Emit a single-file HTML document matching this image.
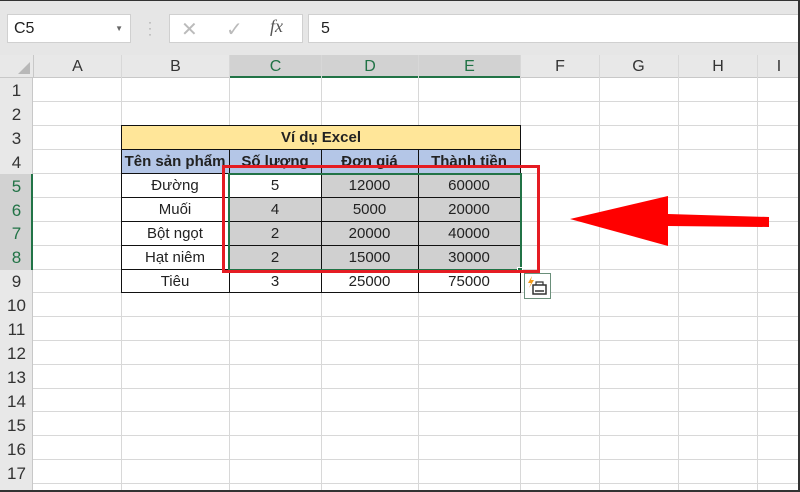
<!DOCTYPE html><html><head><meta charset="utf-8"><style>
*{margin:0;padding:0;box-sizing:border-box}
html,body{width:800px;height:492px;overflow:hidden}
body{background:#fff;position:relative;font-family:"Liberation Sans",sans-serif;font-size:15px;color:#222}
#w{position:absolute;left:0;top:0;width:800px;height:492px;overflow:hidden}
.a{position:absolute}
.vl{position:absolute;width:1px;background:#d8d8d8;top:55px;height:437px}
.hl{position:absolute;height:1px;background:#d8d8d8;left:0;width:800px}
.rh{position:absolute;left:0;width:33px;background:#e8e8e8;text-align:center;font-size:16px;color:#333;border-right:1px solid #c8c8c8}
.ch{position:absolute;top:55px;height:23px;text-align:center;line-height:23px;font-size:16px;color:#333}
.c{position:absolute;text-align:center;line-height:23px;height:24px}
.b{font-weight:bold}
</style></head><body><div id="w">
<div class="a" style="left:0;top:0;width:800px;height:55px;background:#e6e6e6;border-top:1px solid #333"></div>
<div class="a" style="left:7px;top:14px;width:124px;height:29px;background:#fff;border:1px solid #d0d0d0;font-size:16px;line-height:27px;padding-left:6px">C5<span style="position:absolute;right:7px;top:0;font-size:8px;color:#666">▼</span></div>
<div class="a" style="left:148px;top:19px;color:#999;font-size:12px;line-height:6px">·<br>·<br>·</div>
<div class="a" style="left:169px;top:14px;width:134px;height:29px;background:#fff;border:1px solid #d0d0d0"></div>
<div class="a" style="left:181px;top:17px;color:#bbb;font-size:20px">✕</div>
<div class="a" style="left:226px;top:17px;color:#bbb;font-size:20px">✓</div>
<div class="a" style="left:270px;top:16px;color:#555;font-size:18px;font-style:italic;font-family:'Liberation Serif',serif">fx</div>
<div class="a" style="left:308px;top:14px;width:492px;height:29px;background:#fff;border:1px solid #d0d0d0;line-height:27px;padding-left:12px;font-size:16px">5</div>
<div class="a" style="left:0;top:55px;width:800px;height:23px;background:#e8e8e8;border-bottom:1px solid #c8c8c8"></div>
<div class="a" style="left:229px;top:55px;width:291px;height:23px;background:#d2d2d2;border-bottom:2px solid #217346"></div>
<div class="a" style="left:18px;top:62px;width:0;height:0;border-left:12px solid transparent;border-bottom:12px solid #b8b8b8"></div>
<div class="ch" style="left:33px;width:89px">A</div>
<div class="ch" style="left:122px;width:107px">B</div>
<div class="ch" style="left:229px;width:93px;color:#217346">C</div>
<div class="ch" style="left:322px;width:96px;color:#217346">D</div>
<div class="ch" style="left:418px;width:103px;color:#217346">E</div>
<div class="ch" style="left:521px;width:78px">F</div>
<div class="ch" style="left:599px;width:79px">G</div>
<div class="ch" style="left:678px;width:80px">H</div>
<div class="ch" style="left:758px;width:42px">I</div>
<div class="a" style="left:33px;top:55px;width:1px;height:23px;background:#c8c8c8"></div>
<div class="vl" style="left:121px"></div><div class="vl" style="left:229px"></div><div class="vl" style="left:321px"></div><div class="vl" style="left:418px"></div><div class="vl" style="left:520px"></div><div class="vl" style="left:599px"></div><div class="vl" style="left:678px"></div><div class="vl" style="left:757px"></div>
<div class="hl" style="top:101px"></div><div class="hl" style="top:125px"></div><div class="hl" style="top:149px"></div><div class="hl" style="top:173px"></div><div class="hl" style="top:197px"></div><div class="hl" style="top:221px"></div><div class="hl" style="top:245px"></div><div class="hl" style="top:269px"></div><div class="hl" style="top:292px"></div><div class="hl" style="top:316px"></div><div class="hl" style="top:340px"></div><div class="hl" style="top:364px"></div><div class="hl" style="top:388px"></div><div class="hl" style="top:411px"></div><div class="hl" style="top:435px"></div><div class="hl" style="top:459px"></div><div class="hl" style="top:483px"></div>
<div class="rh" style="top:78px;height:414px"></div>
<div class="rh" style="top:174px;height:96px;background:#d2d2d2;border-right:2px solid #217346"></div>
<div class="a" style="left:0;top:79px;width:33px;font-size:17px;color:#333;text-align:center;line-height:23.9px">1<br>2<br>3<br>4<br><span style="color:#217346">5<br>6<br>7<br>8</span><br>9<br>10<br>11<br>12<br>13<br>14<br>15<br>16<br>17<br>18</div>
<div class="a" style="left:121px;top:126px;width:399px;height:24px;background:#ffe699"></div>
<div class="a" style="left:121px;top:150px;width:399px;height:24px;background:#b4c6e7"></div>
<div class="a" style="left:229px;top:174px;width:291px;height:96px;background:#d0d0d0"></div>
<div class="a" style="left:229px;top:174px;width:92px;height:24px;background:#fff"></div>
<div class="a" style="left:121px;top:125px;width:400px;height:168px;border:1px solid #111"></div>
<div class="a" style="left:121px;top:149px;width:400px;height:1px;background:#111"></div>
<div class="a" style="left:121px;top:173px;width:400px;height:1px;background:#111"></div>
<div class="a" style="left:121px;top:197px;width:400px;height:1px;background:#111"></div>
<div class="a" style="left:121px;top:221px;width:400px;height:1px;background:#111"></div>
<div class="a" style="left:121px;top:245px;width:400px;height:1px;background:#111"></div>
<div class="a" style="left:121px;top:269px;width:400px;height:1px;background:#111"></div>
<div class="a" style="left:229px;top:149px;width:1px;height:144px;background:#111"></div>
<div class="a" style="left:321px;top:149px;width:1px;height:144px;background:#111"></div>
<div class="a" style="left:418px;top:149px;width:1px;height:144px;background:#111"></div>
<div class="a" style="left:228px;top:173px;width:294px;height:98px;border:2px solid #217346"></div>
<div class="a" style="left:517px;top:267px;width:6px;height:6px;background:#217346;border:1px solid #fff"></div>
<div class="c b" style="left:121px;top:126px;width:400px">Ví dụ Excel</div>
<div class="c b" style="left:121px;top:150px;width:108px">Tên sản phẩm</div>
<div class="c b" style="left:229px;top:150px;width:92px">Số lượng</div>
<div class="c b" style="left:321px;top:150px;width:97px">Đơn giá</div>
<div class="c b" style="left:418px;top:150px;width:102px">Thành tiền</div>
<div class="c" style="left:121px;top:174px;width:108px">Đường</div><div class="c" style="left:229px;top:174px;width:92px">5</div><div class="c" style="left:321px;top:174px;width:97px">12000</div><div class="c" style="left:418px;top:174px;width:102px">60000</div>
<div class="c" style="left:121px;top:198px;width:108px">Muối</div><div class="c" style="left:229px;top:198px;width:92px">4</div><div class="c" style="left:321px;top:198px;width:97px">5000</div><div class="c" style="left:418px;top:198px;width:102px">20000</div>
<div class="c" style="left:121px;top:222px;width:108px">Bột ngọt</div><div class="c" style="left:229px;top:222px;width:92px">2</div><div class="c" style="left:321px;top:222px;width:97px">20000</div><div class="c" style="left:418px;top:222px;width:102px">40000</div>
<div class="c" style="left:121px;top:246px;width:108px">Hạt niêm</div><div class="c" style="left:229px;top:246px;width:92px">2</div><div class="c" style="left:321px;top:246px;width:97px">15000</div><div class="c" style="left:418px;top:246px;width:102px">30000</div>
<div class="c" style="left:121px;top:270px;width:108px">Tiêu</div><div class="c" style="left:229px;top:270px;width:92px">3</div><div class="c" style="left:321px;top:270px;width:97px">25000</div><div class="c" style="left:418px;top:270px;width:102px">75000</div>
<div class="a" style="left:222px;top:165px;width:318px;height:108px;border:3px solid #e51c23"></div>
<div class="a" style="left:524px;top:273px;width:27px;height:26px;border:1px solid #6a8f7a;background:#fff"></div>
<svg class="a" style="left:524px;top:273px" width="28" height="27"><path d="M8 3 L4 10 L7 10 L5 15 L10 7 L7 7 Z" fill="#f29a1b"/><rect x="9" y="12" width="13" height="9" fill="none" stroke="#333" stroke-width="1.5"/><path d="M12 12 V9 H19 V12" fill="none" stroke="#333" stroke-width="1.2"/><line x1="11" y1="18" x2="20" y2="18" stroke="#333" stroke-width="1.5"/></svg>
<svg class="a" style="left:0;top:0" width="800" height="492"><polygon points="570,219 668,196 668,214 769,217 769,227 668,226 668,246" fill="#f00"/></svg>
<div class="a" style="left:0;top:490px;width:800px;height:2px;background:#333"></div>
<div class="a" style="left:798px;top:0;width:2px;height:492px;background:#333"></div>
</div></body></html>
